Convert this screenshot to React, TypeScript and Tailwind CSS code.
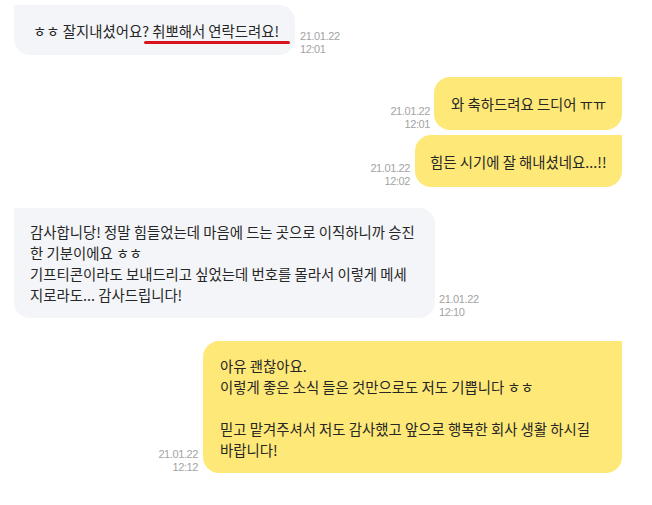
const bodyFont = { fontFamily: '"Noto Sans CJK KR", "Noto Sans", sans-serif' };

function Stamp({ date, time, right }: { date: string; time: string; right?: boolean }) {
  return (
    <div
      className={`text-[11px] leading-[13px] tracking-[-0.4px] text-[#a3a3a3] font-['Liberation_Sans',sans-serif] mb-[-1px] ${
        right ? 'text-right' : 'text-left'
      }`}
    >
      <div>{date}</div>
      <div>{time}</div>
    </div>
  );
}

export default function App() {
  return (
    <div className="w-[652px] h-[505px] bg-white overflow-hidden pt-[5px] text-[14.4px] leading-[21px] text-[#262626]" style={bodyFont}>
      {/* received */}
      <div className="flex items-end gap-[5px] pl-[14px]">
        <div className="relative w-[281px] h-[50px] flex items-center pl-[19px] bg-[#f4f5f8] rounded-[16px] rounded-tl-none">
          <span>ㅎㅎ 잘지내셨어요? 취뽀해서 연락드려요!</span>
          <span className="absolute left-[130px] top-[36px] w-[146px] h-[3px] rounded-full bg-[#d8141f]" />
        </div>
        <Stamp date="21.01.22" time="12:01" />
      </div>

      {/* sent */}
      <div className="flex items-end justify-end gap-[4px] pr-[30px] mt-[22px]">
        <Stamp date="21.01.22" time="12:01" right />
        <div className="w-[188px] h-[53px] flex items-center pl-[17px] bg-[#fee978] rounded-[16px] rounded-tr-none">
          와 축하드려요 드디어 ㅠㅠ
        </div>
      </div>
      <div className="flex items-end justify-end gap-[5px] pr-[30px] mt-[5px]">
        <Stamp date="21.01.22" time="12:02" right />
        <div className="w-[207px] h-[52px] flex items-center pl-[15px] bg-[#fee978] rounded-[16px] rounded-tr-none">
          힘든 시기에 잘 해내셨네요...!!
        </div>
      </div>

      {/* received */}
      <div className="flex items-end gap-[4px] pl-[14px] mt-[21px]">
        <div className="w-[421px] h-[110px] pl-[16px] pt-[13px] bg-[#f4f5f8] rounded-[16px] rounded-tl-none whitespace-pre-line">
          {'감사합니당! 정말 힘들었는데 마음에 드는 곳으로 이직하니까 승진\n한 기분이에요 ㅎㅎ\n기프티콘이라도 보내드리고 싶었는데 번호를 몰라서 이렇게 메세\n지로라도... 감사드립니다!'}
        </div>
        <Stamp date="21.01.22" time="12:10" />
      </div>

      {/* sent */}
      <div className="flex items-end justify-end gap-[5px] pr-[30px] mt-[23px]">
        <Stamp date="21.01.22" time="12:12" right />
        <div className="w-[419px] h-[132px] pl-[17px] pt-[14px] bg-[#fee978] rounded-[16px] rounded-tr-none whitespace-pre-line">
          {'아유 괜찮아요.\n이렇게 좋은 소식 들은 것만으로도 저도 기쁩니다 ㅎㅎ\n\n믿고 맡겨주셔서 저도 감사했고 앞으로 행복한 회사 생활 하시길\n바랍니다!'}
        </div>
      </div>
    </div>
  );
}
